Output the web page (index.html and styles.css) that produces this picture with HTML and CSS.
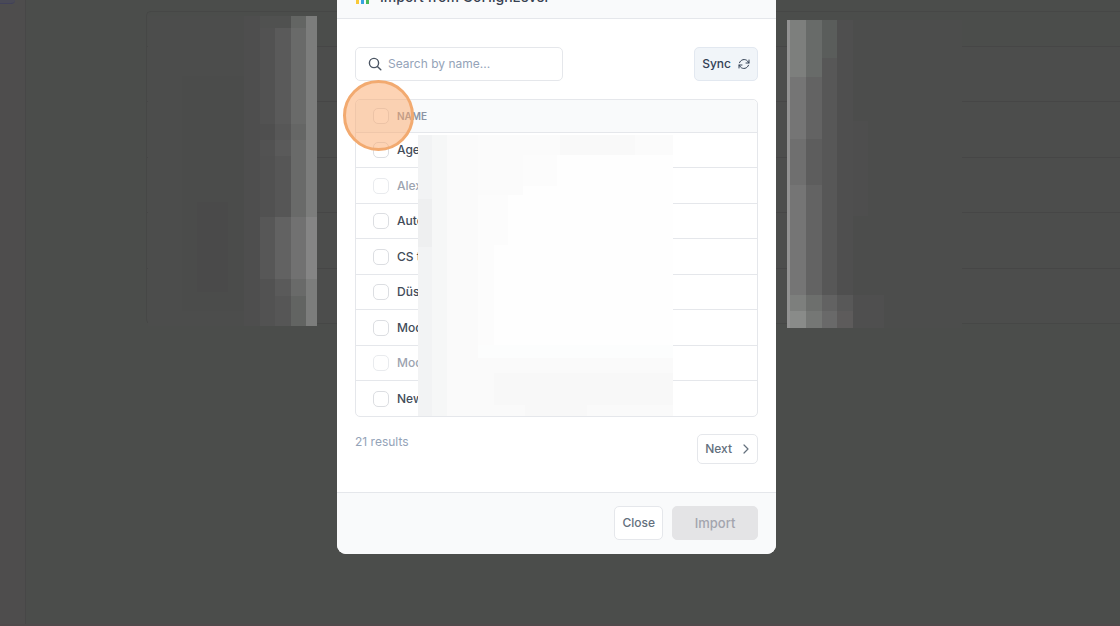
FILE: index.html
```html
<!DOCTYPE html>
<html lang="en">
<head>
  <meta charset="UTF-8" />
  <meta name="viewport" content="width=device-width, initial-scale=1.0" />
  <title>Import from GoHighLevel</title>
  <link rel="stylesheet" href="styles.css">
</head>
<body>
  <!-- Dimmed page behind the dialog -->
  <div class="page">
    <div class="sidebar"><div class="nav-item"></div></div>
    <div class="content">
      <div class="list">
        <div class="list-head"></div>
        <div class="list-row"></div>
        <div class="list-row"></div>
        <div class="list-row"></div>
        <div class="list-row"></div>
        <div class="list-row"></div>
        <svg class="redact redact-left" width="169" height="310" viewBox="0 0 169 310" shape-rendering="crispEdges" aria-hidden="true">
          <rect width="169" height="310" fill="#4c4d4c"/>
          <rect x="34" y="60" width="62" height="235" fill="#4b4c4b"/>
          <rect x="49" y="186" width="31" height="90" fill="#4a4a4a"/>
          <rect x="96" width="16" height="310" fill="#4e4e4e"/>
          <rect x="112" width="15" height="310" fill="#525252"/>
          <rect x="127" width="16" height="310" fill="#5a5a5a"/>
          <rect x="143" width="15" height="310" fill="#696a69"/>
          <rect x="158" width="11" height="310" fill="#7c7d7c"/>
          <rect x="112" width="31" height="12" fill="#505150"/>
          <rect x="143" width="15" height="12" fill="#636563"/>
          <rect x="112" y="108" width="46" height="16" fill="#000" opacity=".03"/>
          <rect x="112" y="140" width="31" height="61" fill="#505050" opacity=".4"/>
          <rect x="112" y="201" width="15" height="62" fill="#575757"/>
          <rect x="127" y="201" width="16" height="62" fill="#626262"/>
          <rect x="143" y="201" width="15" height="62" fill="#717171"/>
          <rect x="158" y="201" width="11" height="62" fill="#858585"/>
          <rect x="143" y="280" width="15" height="30" fill="#626462"/>
          <rect x="112" y="280" width="31" height="30" fill="#515151" opacity=".5"/>
        </svg>
        <svg class="redact redact-right" width="175" height="308" viewBox="0 0 175 308" shape-rendering="crispEdges" aria-hidden="true">
          <rect width="175" height="308" fill="#4c4d4c"/>
          <rect width="19" height="308" fill="#757575"/>
          <rect x="19" width="16" height="308" fill="#636363"/>
          <rect x="35" width="15" height="308" fill="#575757"/>
          <rect x="50" width="16" height="308" fill="#4f4f4f"/>
          <rect width="19" height="57" fill="#7d7f7d"/>
          <rect x="19" width="16" height="57" fill="#686b69"/>
          <rect x="35" width="15" height="38" fill="#5a5d5b"/>
          <rect y="119" width="35" height="46" fill="#000" opacity=".05"/>
          <rect x="66" y="101" width="15" height="95" fill="#4e4e4e"/>
          <rect y="275" width="19" height="16" fill="#7d7f7d"/>
          <rect x="19" y="275" width="16" height="16" fill="#6d6f6d"/>
          <rect x="35" y="275" width="15" height="16" fill="#626262"/>
          <rect x="50" y="275" width="16" height="16" fill="#585858"/>
          <rect x="66" y="275" width="31" height="33" fill="#4f4f4f"/>
          <rect y="291" width="19" height="17" fill="#898b89"/>
          <rect x="19" y="291" width="16" height="17" fill="#757775"/>
          <rect x="35" y="291" width="15" height="17" fill="#696969"/>
          <rect x="50" y="291" width="16" height="17" fill="#5d5b5b"/>
          <rect width="3" height="308" fill="#929292"/>
        </svg>
      </div>
    </div>
  </div>

  <div class="overlay">
    <div class="modal" role="dialog" aria-labelledby="modal-title">
      <div class="modal-header">
        <svg class="logo" width="16" height="16" viewBox="0 0 16 16" aria-hidden="true">
          <path d="M2.500 15V7" stroke="#f9c938" stroke-width="3"/>
          <path d="M7.500 15V6" stroke="#38a3e0" stroke-width="3"/>
          <path d="M12.500 15V4" stroke="#4cba56" stroke-width="3"/>
          <path d="M0 8L2.500 4L5 8Z" fill="#f9c938"/>
          <path d="M5 7L7.500 3L10 7Z" fill="#38a3e0"/>
          <path d="M10 5L12.500 1L15 5Z" fill="#4cba56"/>
        </svg>
        <h2 id="modal-title">Import from GoHighLevel</h2>
      </div>

      <div class="modal-body">
        <div class="toolbar">
          <div class="search">
            <svg width="14" height="14" viewBox="0 0 14 14" fill="none" stroke="#4b5563" stroke-width="1.400" stroke-linecap="round" aria-hidden="true">
              <circle cx="6" cy="6" r="4.600"/>
              <path d="M9.400 9.400L12.800 12.800"/>
            </svg>
            <input type="text" placeholder="Search by name..." aria-label="Search by name" />
          </div>
          <button class="btn btn-sync" type="button">Sync
            <svg width="12" height="12" viewBox="0 0 24 24" fill="none" stroke="currentColor" stroke-width="2" stroke-linecap="round" stroke-linejoin="round" aria-hidden="true">
              <path d="M22 4v6h-6M2 20v-6h6"/>
              <path d="M3 9.500a9.500 9.500 0 0 1 16-3.500L22 10M2 14l3 4a9.500 9.500 0 0 0 16-3.500"/>
            </svg>
          </button>
        </div>

        <div class="table-wrap">
          <table class="accounts">
            <thead>
              <tr><th><label><input type="checkbox" /> NAME</label></th></tr>
            </thead>
            <tbody>
              <tr><td><label><input type="checkbox" /> Age</label></td></tr>
              <tr class="disabled"><td><label><input type="checkbox" disabled /> Alex</label></td></tr>
              <tr><td><label><input type="checkbox" /> Auto</label></td></tr>
              <tr><td><label><input type="checkbox" /> CS t</label></td></tr>
              <tr><td><label><input type="checkbox" /> Düss</label></td></tr>
              <tr><td><label><input type="checkbox" /> Mod</label></td></tr>
              <tr class="disabled"><td><label><input type="checkbox" disabled /> Mod</label></td></tr>
              <tr><td><label><input type="checkbox" /> New</label></td></tr>
            </tbody>
          </table>
          <svg class="redact redact-names" width="255" height="281" viewBox="0 0 255 281" shape-rendering="crispEdges" aria-hidden="true">
            <rect width="255" height="281" fill="#fefefe"/>
            <rect width="14" height="281" fill="#f2f3f4"/>
            <rect y="64" width="14" height="48" fill="#eeeff0"/>
            <rect x="14" width="15" height="281" fill="#f6f7f7"/>
            <rect x="29" width="31" height="281" fill="#fafafa"/>
            <rect x="60" width="45" height="60" fill="#fbfbfb"/>
            <rect x="60" y="60" width="30" height="50" fill="#fcfcfc"/>
            <rect x="60" y="110" width="16" height="100" fill="#fcfcfc"/>
            <rect x="105" width="150" height="20" fill="#fbfbfb"/>
            <rect x="142" width="75" height="20" fill="#f9f9f9"/>
            <rect x="105" y="20" width="34" height="31" fill="#fcfcfc"/>
            <rect x="60" y="210" width="195" height="13" fill="#fcfdfd"/>
            <rect x="29" y="223" width="226" height="58" fill="#fafafa"/>
            <rect x="76" y="238" width="179" height="32" fill="#f8f8f8"/>
            <rect x="107" y="256" width="62" height="25" fill="#f8f8f8"/>
          </svg>
          <div class="pointer"></div>
        </div>

        <div class="pager">
          <span class="count">21 results</span>
          <button class="btn btn-next" type="button">Next
            <svg width="8" height="10" viewBox="0 0 8 10" fill="none" stroke="currentColor" stroke-width="1.200" stroke-linecap="round" stroke-linejoin="round" aria-hidden="true">
              <path d="M2 1l4 4-4 4"/>
            </svg>
          </button>
        </div>
      </div>

      <div class="modal-footer">
        <button class="btn" type="button">Close</button>
        <button class="btn btn-import" type="button" disabled>Import</button>
      </div>
    </div>
  </div>
</body>
</html>
```
FILE: styles.css
```css
* { box-sizing: border-box; }
body { margin: 0; font-family: Inter, "Liberation Sans", sans-serif; font-size: 12px; line-height: 16px; background: #4b4d4b; overflow: hidden; }
button, input { font: inherit; }

/* Background page */
.page { display: flex; height: 100vh; border-bottom: 2px solid #4f4a4b; }
.sidebar { width: 26px; background: #4e4d4d; border-right: 1px solid #474747; }
.nav-item { width: 15px; height: 4px; background: #4a4a56; border-bottom: 1px solid #41415a; border-radius: 0 0 4px 0; }
.content { flex: 1; padding: 11px 0 0 120px; }
.list { position: relative; border: 1px solid #464746; border-right: none; border-radius: 5px 0 0 5px; background: #4c4d4c; }
.list-head { height: 34px; background: #4b4d4b; border-radius: 5px 0 0 0; }
.list-row { height: 56px; border-top: 1px solid #464646; }
.list-row:nth-child(even) { height: 55px; }

/* Pixelated areas */
.redact { position: absolute; display: block; }
.redact-left { top: 4px; left: 1px; }
.redact-right { top: 8px; left: 640px; }
.redact-names { top: 35px; left: 62px; }

/* Modal */
.overlay { position: fixed; inset: 0; display: flex; justify-content: center; align-items: flex-end; padding: 0 7px 72px 0; }
.modal { width: 100%; max-width: 439px; background: #fff; border-radius: 9px; overflow: hidden; }
.modal-header { display: flex; align-items: center; gap: 9px; padding: 11px 18px; background: #f9fafb; border-bottom: 1px solid #e5e7eb; }
.modal-header h2 { margin: 0; font-size: 14px; line-height: 20px; font-weight: 500; color: #374151; }
.modal-body { padding: 28px 18px; }
.modal-footer { display: flex; justify-content: flex-end; gap: 9px; padding: 13px 18px 14px; background: #f9fafb; border-top: 1px solid #e5e7eb; }

.toolbar { display: flex; justify-content: space-between; margin-bottom: 18px; }
.search { display: flex; align-items: center; gap: 6px; width: 208px; height: 34px; padding: 0 12px; border: 1px solid #e5e7eb; border-radius: 5px; }
.search svg { flex: none; }
.search input { flex: 1; min-width: 0; padding: 0; border: none; outline: none; background: none; color: #374151; }
.search input::placeholder { color: #94a3b8; opacity: 1; }

.btn { display: flex; align-items: center; justify-content: center; height: 34px; padding: 0 7px; border: 1px solid #e5e7eb; border-radius: 5px; background: #fff; color: #64707d; font-weight: 500; cursor: pointer; }
.btn-sync { gap: 7px; background: #f1f5f9; border-color: #e2e8f0; color: #334155; }
.btn-next { gap: 10px; height: 30px; }
.btn-import { width: 86px; background: #e4e4e6; border-color: #e4e4e6; color: #a3a5ae; font-size: 13px; cursor: not-allowed; }

.table-wrap { position: relative; border: 1px solid #e5e7eb; border-radius: 5px; }
.accounts { width: 100%; border-collapse: separate; border-spacing: 0; }
.accounts th, .accounts td { padding: 0 17px; text-align: left; font-weight: 500; color: #414b59; }
.accounts th { height: 32px; background: #f9fafb; border-radius: 5px 5px 0 0; font-size: 10px; font-weight: 600; color: #8b93a3; }
.accounts td { height: 35px; border-top: 1px solid #e5e7eb; }
.accounts tr:nth-child(even) td { height: 36px; }
.accounts label { display: flex; align-items: center; gap: 8px; }
.accounts input { appearance: none; width: 16px; height: 16px; margin: 0; border: 1px solid #dcdee2; border-radius: 5px; background: #fff; }
.accounts .disabled td { color: #9ca3af; }
.accounts .disabled input { border-color: #e9ebee; }

/* Click highlight */
.pointer { position: absolute; top: -20px; left: -13px; width: 71px; height: 71px; border: 3px solid #f2aa70; border-radius: 50%; background: rgba(252, 168, 106, 0.5); pointer-events: none; }

.pager { display: flex; justify-content: space-between; align-items: flex-start; margin-top: 17px; }
.count { color: #94a3b8; }
```
